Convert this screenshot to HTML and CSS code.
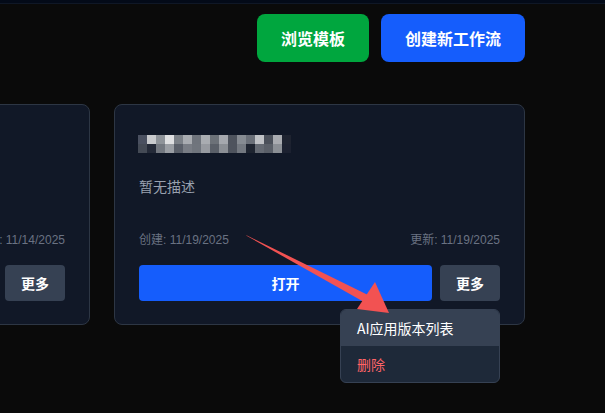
FILE: index.html
```html
<!DOCTYPE html>
<html lang="zh-CN">
<head>
<meta charset="utf-8">
<title>工作流</title>
<link rel="stylesheet" href="styles.css">
</head>
<body>
<div class="topbar"></div>
<main class="page">
  <div class="actions">
    <button class="btn btn-green">浏览模板</button>
    <button class="btn btn-blue">创建新工作流</button>
  </div>
  <div class="grid">
    <div class="card">
      <div class="title"></div>
      <p class="desc">暂无描述</p>
      <div class="dates"><span>创建: 11/14/2025</span><span>更新: 11/14/2025</span></div>
      <div class="row">
        <button class="open">打开</button>
        <div class="more-wrap"><button class="more">更多</button></div>
      </div>
    </div>
    <div class="card">
      <div class="title">
        <svg class="pix" width="153" height="18" viewBox="0 0 153 18">
          <g>
            <rect x="0" y="0" width="9" height="9" fill="#4a5060"/>
            <rect x="9" y="0" width="9" height="9" fill="#c8cacd"/>
            <rect x="18" y="0" width="9" height="9" fill="#8e9399"/>
            <rect x="27" y="0" width="9" height="9" fill="#dfe0e2"/>
            <rect x="36" y="0" width="9" height="9" fill="#7c8188"/>
            <rect x="45" y="0" width="9" height="9" fill="#a9acb1"/>
            <rect x="54" y="0" width="9" height="9" fill="#6f747c"/>
            <rect x="63" y="0" width="9" height="9" fill="#a9acb1"/>
            <rect x="72" y="0" width="9" height="9" fill="#6c7178"/>
            <rect x="81" y="0" width="9" height="9" fill="#a5a8ae"/>
            <rect x="90" y="0" width="9" height="9" fill="#4e535d"/>
            <rect x="99" y="0" width="9" height="9" fill="#868b92"/>
            <rect x="108" y="0" width="9" height="9" fill="#6a6f78"/>
            <rect x="117" y="0" width="9" height="9" fill="#c0c2c6"/>
            <rect x="126" y="0" width="9" height="9" fill="#4b505a"/>
            <rect x="135" y="0" width="9" height="9" fill="#a9abb0"/>
            <rect x="144" y="0" width="9" height="9" fill="#1e2330"/>
            <rect x="0" y="9" width="9" height="9" fill="#444a55"/>
            <rect x="9" y="9" width="9" height="9" fill="#242a38"/>
            <rect x="18" y="9" width="9" height="9" fill="#737880"/>
            <rect x="27" y="9" width="9" height="9" fill="#9a9ea4"/>
            <rect x="36" y="9" width="9" height="9" fill="#5a5f69"/>
            <rect x="45" y="9" width="9" height="9" fill="#797d85"/>
            <rect x="54" y="9" width="9" height="9" fill="#70757d"/>
            <rect x="63" y="9" width="9" height="9" fill="#979aa0"/>
            <rect x="72" y="9" width="9" height="9" fill="#5a5f68"/>
            <rect x="81" y="9" width="9" height="9" fill="#8b8f95"/>
            <rect x="90" y="9" width="9" height="9" fill="#4e535d"/>
            <rect x="99" y="9" width="9" height="9" fill="#737880"/>
            <rect x="108" y="9" width="9" height="9" fill="#1e2430"/>
            <rect x="117" y="9" width="9" height="9" fill="#656a73"/>
            <rect x="126" y="9" width="9" height="9" fill="#5a5f68"/>
            <rect x="135" y="9" width="9" height="9" fill="#8b8f95"/>
            <rect x="144" y="9" width="9" height="9" fill="#1c2130"/>
          </g>
        </svg>
      </div>
      <p class="desc">暂无描述</p>
      <div class="dates"><span>创建: 11/19/2025</span><span>更新: 11/19/2025</span></div>
      <div class="row">
        <button class="open">打开</button>
        <div class="more-wrap">
          <button class="more">更多</button>
          <div class="menu">
            <div class="menu-item active">AI应用版本列表</div>
            <div class="menu-item danger">删除</div>
          </div>
        </div>
      </div>
    </div>
  </div>
</main>
<svg class="annot" width="605" height="413" viewBox="0 0 605 413">
  <polygon points="246,235 368,295 364,302 247,236" fill="#f25252"/>
  <polygon points="389,313 357,309 375,282" fill="#f25252"/>
</svg>
</body>
</html>
```

FILE: styles.css
```css
* { box-sizing: border-box; }
html, body {
  margin: 0;
  padding: 0;
  background: #0a0a0a;
  width: 605px;
  height: 413px;
  overflow: hidden;
  font-family: "Liberation Sans", "Noto Sans CJK SC", sans-serif;
}
.topbar {
  height: 4px;
  background: #030a18;
  border-bottom: 1px solid #0f1726;
}
.page {
  padding: 10px 80px 0 0;
}
.actions {
  display: flex;
  justify-content: flex-end;
  gap: 12px;
}
.btn {
  height: 48px;
  padding: 0 24px;
  border: 0;
  border-radius: 8px;
  color: #fff;
  font-family: "Noto Sans CJK SC", sans-serif;
  font-weight: 700;
  font-size: 16px;
}
.btn-green { background: #00a63e; }
.btn-blue { background: #155dfc; }
.grid {
  display: flex;
  justify-content: flex-end;
  gap: 24px;
  margin-top: 42px;
}
.card {
  flex: 0 0 411px;
  width: 411px;
  height: 221px;
  background: #111827;
  border: 1px solid #2d3644;
  border-radius: 8px;
  padding: 24px 24px 23px 24px;
  display: flex;
  flex-direction: column;
}
.title {
  height: 30px;
  display: flex;
  align-items: center;
}
.pix { display: block; margin-left: -1px; }
.desc {
  margin: 17px 0 0;
  font-family: "Noto Sans CJK SC", sans-serif;
  font-size: 14px;
  line-height: 20px;
  color: #99a1af;
}
.dates {
  margin-top: 35px;
  display: flex;
  justify-content: space-between;
  font-size: 12px;
  line-height: 18px;
  color: #6a7282;
}
.row {
  margin-top: 16px;
  display: flex;
  gap: 8px;
}
.open {
  flex: 1;
  height: 36px;
  border: 0;
  border-radius: 4px;
  background: #155dfc;
  color: #fff;
  font-family: "Noto Sans CJK SC", sans-serif;
  font-weight: 700;
  font-size: 14px;
}
.more-wrap { position: relative; }
.more {
  width: 60px;
  height: 36px;
  border: 0;
  border-radius: 4px;
  background: #364153;
  color: #fff;
  font-family: "Noto Sans CJK SC", sans-serif;
  font-weight: 700;
  font-size: 14px;
}
.menu {
  position: absolute;
  top: 44px;
  right: 0;
  width: 160px;
  background: #1e2939;
  border: 1px solid #364153;
  border-radius: 6px;
  overflow: hidden;
  z-index: 2;
}
.menu-item {
  height: 36px;
  padding: 0 16px;
  display: flex;
  align-items: center;
  font-family: "Noto Sans CJK SC", sans-serif;
  font-size: 14px;
  color: #fff;
}
.menu-item.active { background: #364153; }
.menu-item.danger { color: #ff6467; }
.annot {
  position: absolute;
  left: 0;
  top: 0;
  pointer-events: none;
  z-index: 5;
}
```
